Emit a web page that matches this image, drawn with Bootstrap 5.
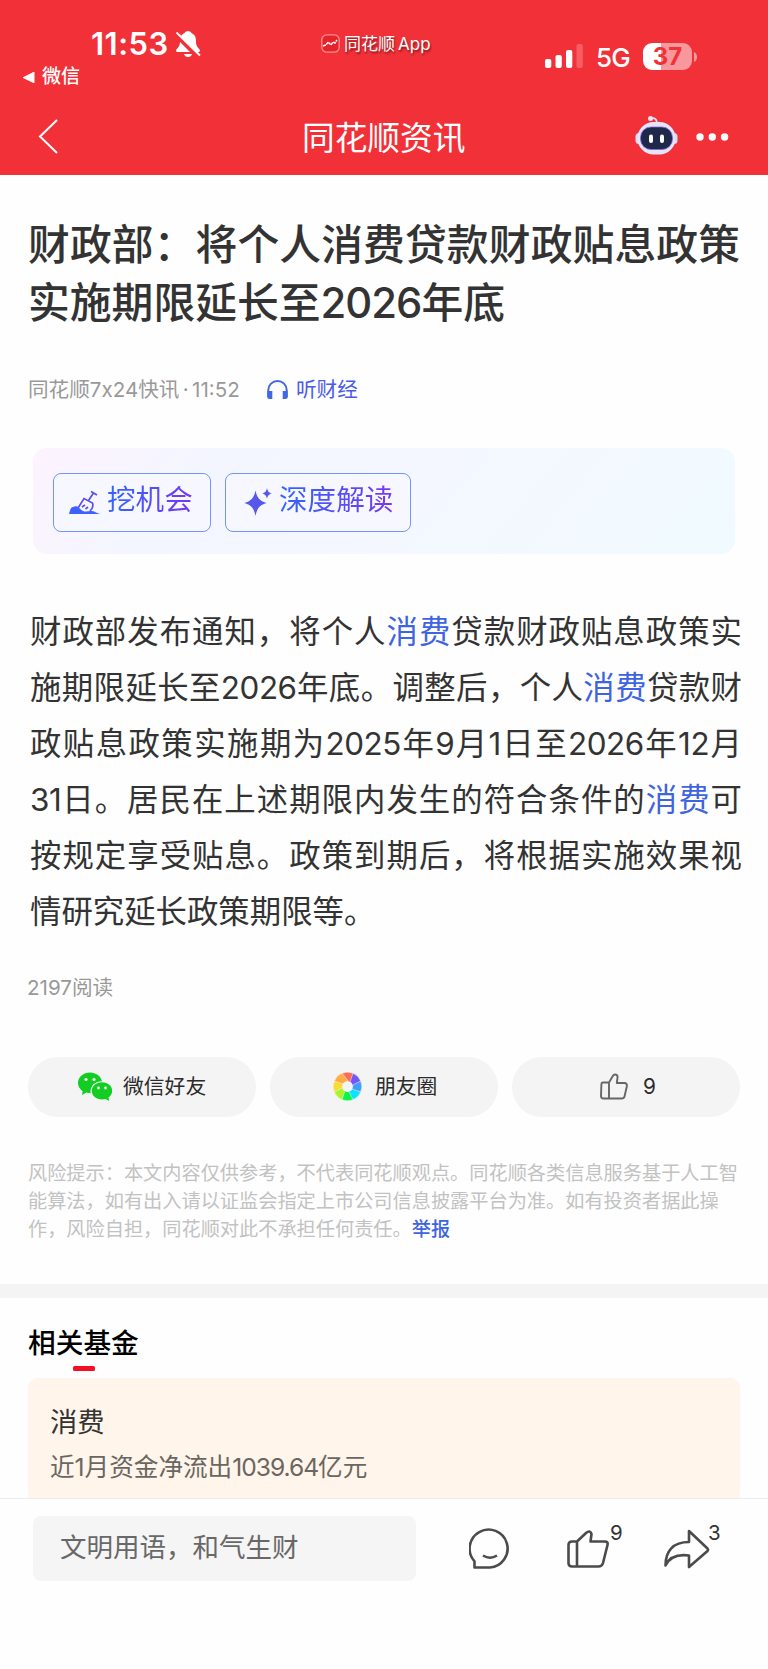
<!DOCTYPE html>
<html lang="zh-CN">
<head>
<meta charset="utf-8">
<meta name="viewport" content="width=device-width, initial-scale=1">
<title>同花顺资讯</title>
<link href="https://cdn.jsdelivr.net/npm/bootstrap@5.3.0/dist/css/bootstrap.min.css" rel="stylesheet">
<style>
body{font-family:Inter,"Noto Sans CJK SC",sans-serif;color:#333;background:#fefefe;width:768px;height:1669px;overflow:hidden}
svg{display:block;flex:none}
.app-head{background:#f23038;height:175px;color:#fff}
.status-row{height:100px}
.clock{font-size:31px;font-weight:600;line-height:36px;letter-spacing:.5px}
.back-app{font-size:19px;line-height:24px;font-weight:500}
.app-chip{font-size:17px;line-height:20px;text-shadow:1px 2px 2px rgba(0,0,0,.45)}
.net{font-size:26px;line-height:30px;font-weight:500;letter-spacing:-.9px}
.batt{width:49px;height:27px;border-radius:9px;background:linear-gradient(90deg,#fff 37%,#f9989c 37%);color:#f23038;font-size:24px;font-weight:700;line-height:27px}
.nav-row{height:75px}
.nav-title{font-size:32.7px;line-height:40px;width:164px;white-space:nowrap}
.headline{font-size:41.8px;line-height:57.6px;font-weight:500;padding:42px 28px 0;margin:0;color:#333}
.headline i,.story i,.fund-sub i{font-style:normal;letter-spacing:-1px}
.story i{letter-spacing:-.45px}
.fund-sub i{letter-spacing:-1px}
.fill-line{display:block;white-space:nowrap;text-align-last:justify}
.meta-row{font-size:20.6px;line-height:26px;color:#999;margin-top:45px;padding-left:28px}
.listen{color:#4a5bea}
.ai-box{margin:45px 33px 0;height:105.5px;border-radius:14px;padding:3px 0 0 20px;background:linear-gradient(130deg,#fdf3fe 0%,#f4f6ff 22%,#f4f8ff 65%,#f0fbff 100%)}
.ai-btn{height:59.5px;border:1.4px solid #7395fa;border-radius:8px;background:#f7f8ff;font-size:28.6px;line-height:40px}
.ai-btn span{background:linear-gradient(100deg,#2e68ff,#7a35f0);-webkit-background-clip:text;background-clip:text;color:transparent;position:relative;top:-2px}
.story{font-size:31.4px;line-height:56px;margin:50px 26px 0 30px}
.story a,.notice a{color:#3f64e0;text-decoration:none}
.reads{font-size:20.6px;line-height:26px;color:#999;margin:35px 0 0 27px}
.share-row{margin:56.5px 28px 0;gap:14px}
.pill-btn{width:228px;height:59.5px;border-radius:30px;background:#f4f4f4;color:#2b2b2b;font-size:20.8px}
.notice{font-size:19.2px;line-height:28px;color:#c2c2c2;margin:42px 28px 0}
.notice a{font-weight:500}
.band{height:13.5px;background:#f4f4f4;margin-top:41.5px}
.rel-title{font-size:27.7px;line-height:36px;font-weight:500;color:#000;margin:27px 0 0 28px}
.rel-mark{width:22px;height:5.5px;border-radius:1.5px;background:#f30f24;margin:5px 0 0 73px}
.fund{margin:6.5px 28px 0;height:120px;border-radius:9px 9px 0 0;background:#fff5eb;padding:27px 22px 0}
.fund-name{font-size:27.3px;line-height:36px}
.fund-sub{font-size:24.6px;line-height:32px;margin-top:10px;color:#6a6762}
.dock{height:171px;border-top:1px solid #ececee;background:#fefefe;padding:17px 0 0 33px}
.say{width:383px;height:65px;border-radius:8px;background:#f5f5f5;color:#686868;font-size:26.5px;padding-left:27px}
.dock-ico{position:relative;height:65px}
.dock-ico b{position:absolute;top:5px;font-size:20.5px;line-height:24px;font-weight:400}
</style>
</head>
<body>
<header class="app-head">
  <div class="status-row d-flex">
    <div style="width:321px">
      <div class="d-flex align-items-center" style="padding:26px 0 0 91px">
        <span class="clock">11:53</span>
        <svg style="margin-left:6px" width="26" height="28" viewBox="0 0 26 28"><path d="M13 1c-2 0-3 1-3.400 2C6 4.500 5 7.500 5 11c0 5-1.500 6-3.500 8.500-.8 1.200-.5 2.500 1 2.500h21c1.500 0 1.800-1.300 1-2.500C22.500 17 21 16 21 11c0-3.500-1-6.500-4.600-8C16 2 15 1 13 1zM9 24h8c-.5 1.800-2 3-4 3s-3.500-1.200-4-3z" fill="#fff"/><path d="M.5 4 24 27.500" stroke="#f23038" stroke-width="5"/><path d="M1.500 2.500 25 25.500" stroke="#fff" stroke-width="1.900"/></svg>
      </div>
      <div class="back-app d-flex align-items-center" style="padding:3px 0 0 22px">
        <svg width="13" height="13" viewBox="0 0 13 13"><path d="M1.500 6 11.500 1c.8-.3 1 0 1 .8v9.400c0 .8-.3 1-1 .7L1.500 7.200c-.8-.4-.8-.8 0-1.200z" fill="#fff"/></svg>
        <span style="margin-left:7px">微信</span>
      </div>
    </div>
    <div class="app-chip d-flex" style="padding-top:34px;width:224px">
      <svg width="19" height="19" viewBox="0 0 19 19"><rect x=".8" y=".8" width="17.400" height="17.400" rx="5" fill="#e5232b" stroke="#f98e90" stroke-width="1.300"/><path d="M2 12l3-1 2-3 3 3 2-3 2 1 2-3" fill="none" stroke="#fff" stroke-width="1.500" stroke-dasharray="3 .7"/></svg>
      <span style="margin-left:4px">同花顺<span style="margin-left:3px">App</span></span>
    </div>
    <div class="d-flex" style="padding-top:43px">
      <svg width="38" height="25" viewBox="0 0 38 25"><g fill="#fff"><rect x="0" y="16" width="6.300" height="9" rx="2"/><rect x="10.500" y="12" width="6.300" height="13" rx="2"/><rect x="21" y="7" width="6.300" height="18" rx="2"/><rect x="31.500" y="1" width="6.300" height="24" rx="2" opacity=".22"/></g></svg>
      <span class="net" style="margin-left:13px;width:47px">5G</span>
      <div class="batt text-center">37</div>
      <svg style="margin:9px 0 0 2px" width="3" height="10" viewBox="0 0 3 10"><path d="M0 0c4 1.500 4 8.500 0 10z" fill="#f9989c"/></svg>
    </div>
  </div>
  <div class="nav-row d-flex">
    <svg style="margin:18px 0 0 37px" width="22" height="37" viewBox="0 0 22 37"><path d="M20 2 3 18.500 20 35" fill="none" stroke="#fff" stroke-width="2"/></svg>
    <div class="nav-title" style="margin:17.500px 0 0 243px">同花顺资讯</div>
    <svg style="margin:15px 0 0 169px" width="43" height="40" viewBox="0 0 43 40"><path d="M16 3.500c3-1 6 0 6 5" fill="none" stroke="#e3e3f5" stroke-width="1.800"/><circle cx="15.500" cy="3.500" r="2.500" fill="#e3e3f5"/><rect x=".5" y="18" width="7" height="11" rx="3.500" fill="#d7dbf8"/><rect x="35.500" y="18" width="7" height="11" rx="3.500" fill="#d7dbf8"/><rect x="2.500" y="7" width="38" height="32.500" rx="16" fill="#e4e5f9"/><rect x="5.500" y="12" width="32" height="22.500" rx="10.500" fill="#1e2849" stroke="#8b66df" stroke-width=".8"/><rect x="14" y="19.500" width="4" height="8.500" rx="2" fill="#fff"/><rect x="25" y="19.500" width="4" height="8.500" rx="2" fill="#fff"/></svg>
    <svg style="margin:33px 0 0 18px" width="33" height="8" viewBox="0 0 33 8"><g fill="#fff"><circle cx="4" cy="4" r="3.700"/><circle cx="16.300" cy="4" r="3.700"/><circle cx="28.600" cy="4" r="3.700"/></g></svg>
  </div>
</header>

<main>
  <h1 class="headline"><span class="fill-line">财政部：将个人消费贷款财政贴息政策</span><span class="d-block">实施期限延长至<i>2026</i>年底</span></h1>
  <div class="meta-row d-flex align-items-center">
    <span style="width:239px;word-spacing:-2.4px">同花顺7x24快讯 · 11:52</span>
    <svg width="21" height="20" viewBox="0 0 21 20"><path d="M1.300 17v-7a9.200 9 0 0 1 18.400 0v7" fill="none" stroke="#4267df" stroke-width="2"/><path d="M.3 11h5v8H2.500C1 19 .3 18 .3 17zM20.700 11h-5v8h2.800c1.500 0 2.200-1 2.200-2z" fill="#4267df"/></svg>
    <span class="listen ms-2">听财经</span>
  </div>

  <div class="ai-box d-flex align-items-center">
    <div class="ai-btn d-flex align-items-center" style="width:157.500px;padding-left:15px">
      <svg width="31" height="25" viewBox="0 0 31 25"><path d="M0 24c1-4 2-7 4-7s3-1.500 5 0 3 3 5 4c3 1.500 6-.5 9 0 3 .7 5 2 8 3z" fill="#3f62ff"/><g fill="none" stroke="#5a50ee" stroke-width="1.700"><path d="M9 18 15 8.500l8.500 4.500c1.500 4-1.500 7-2.500 8M19.500 10.500 24.500 3M22 1.500l6 3.500M13 17l3-2M16.500 19l2.500-2"/></g></svg>
      <span style="margin-left:7px">挖机会</span>
    </div>
    <div class="ai-btn d-flex align-items-center" style="width:186px;margin-left:14.500px;padding-left:18px">
      <svg width="28" height="28" viewBox="0 0 28 28"><path d="M11.500 2.500c1.500 7 4 10.500 11.300 12.500-7.300 2-9.800 5.500-11.300 13C10 20.500 7.500 17 .2 15 7.500 13 10 9.500 11.500 2.500zM23 0c.7 3.300 1.700 4.600 5 5.500-3.300.9-4.300 2.200-5 5.500-.7-3.300-1.700-4.600-5-5.500 3.300-.9 4.300-2.200 5-5.500z" fill="#5558ea"/></svg>
      <span style="margin-left:7px">深度解读</span>
    </div>
  </div>

  <p class="story"><span class="fill-line">财政部发布通知，将个人<a href="#">消费</a>贷款财政贴息政策实</span><span class="fill-line">施期限延长至<i>2026</i>年底。调整后，个人<a href="#">消费</a>贷款财</span><span class="fill-line">政贴息政策实施期为<i>2025</i>年<i>9</i>月<i>1</i>日至<i>2026</i>年<i>12</i>月</span><span class="fill-line"><i>31</i>日。居民在上述期限内发生的符合条件的<a href="#">消费</a>可</span><span class="fill-line">按规定享受贴息。政策到期后，将根据实施效果视</span><span class="d-block">情研究延长政策期限等。</span></p>
  <div class="reads">2197阅读</div>

  <div class="share-row d-flex">
    <div class="pill-btn d-flex align-items-center" style="padding-left:50px">
      <svg width="34" height="29" viewBox="0 0 34 29"><path d="M12 .5C5.400.5 0 5 0 11c0 3.400 1.800 6.200 4.600 8.200L4 23l4.300-2.400c1.400.4 2.600.6 4.200.6C12 14 17 9 24 9.300 23 4.300 18 .5 12 .5z" fill="#12cd22"/><path d="M24 10.200c-5.800 0-10.200 3.800-10.200 8.600 0 4.900 4.400 8.600 10.200 8.600 1.300 0 2.500-.2 3.600-.5l3.700 2-.8-3.300c2.200-1.700 3.700-4 3.700-6.800 0-4.800-4.400-8.600-10.200-8.600z" fill="#12cd22"/><g fill="#fff"><circle cx="8" cy="7.500" r="1.600"/><circle cx="16" cy="7.500" r="1.600"/><circle cx="20.500" cy="16" r="1.400"/><circle cx="27.500" cy="16" r="1.400"/></g></svg>
      <span style="margin-left:11px">微信好友</span>
    </div>
    <div class="pill-btn d-flex align-items-center" style="padding-left:63px">
      <svg width="29" height="29" viewBox="-14.500 -14.500 29 29"><g stroke="#f4f4f4" stroke-width=".5">
        <path d="M-5.500-13.200A14.300 14.300 0 0 1 5.500-13.200L4.500-3.500-1.700-5.500z" fill="#ff6b50"/>
        <path transform="rotate(45)" d="M-5.500-13.200A14.300 14.300 0 0 1 5.500-13.200L4.500-3.500-1.700-5.500z" fill="#7456fb"/>
        <path transform="rotate(90)" d="M-5.500-13.200A14.300 14.300 0 0 1 5.500-13.200L4.500-3.500-1.700-5.500z" fill="#439dff"/>
        <path transform="rotate(135)" d="M-5.500-13.200A14.300 14.300 0 0 1 5.500-13.200L4.500-3.500-1.700-5.500z" fill="#0be3ff"/>
        <path transform="rotate(180)" d="M-5.500-13.200A14.300 14.300 0 0 1 5.500-13.200L4.500-3.500-1.700-5.500z" fill="#0df347"/>
        <path transform="rotate(225)" d="M-5.500-13.200A14.300 14.300 0 0 1 5.500-13.200L4.500-3.500-1.700-5.500z" fill="#a8f52c"/>
        <path transform="rotate(270)" d="M-5.500-13.200A14.300 14.300 0 0 1 5.500-13.200L4.500-3.500-1.700-5.500z" fill="#f8dc36"/>
        <path transform="rotate(315)" d="M-5.500-13.200A14.300 14.300 0 0 1 5.500-13.200L4.500-3.500-1.700-5.500z" fill="#ffac45"/></g><circle r="5.300" fill="#f4f4f4"/></svg>
      <span style="margin-left:13px">朋友圈</span>
    </div>
    <div class="pill-btn d-flex align-items-center" style="padding-left:88px">
      <svg width="28" height="27" viewBox="0 0 28 27"><path d="M9 9.500h-6Q1.500 9.500 1.400 11L1 23q0 2.500 2.500 2.500h18q2.500 0 3-2l2.300-10q.6-3.500-2.500-3.500h-7.500l.8-6q0-2.500-2.500-2.500-1.500 0-2.300 1.500zM9 9.500v16" fill="none" stroke="#666" stroke-width="1.900" stroke-linejoin="round"/></svg>
      <span style="margin-left:15px">9</span>
    </div>
  </div>

  <p class="notice"><span class="d-block text-nowrap">风险提示：本文内容仅供参考，不代表同花顺观点。同花顺各类信息服务基于人工智</span><span class="d-block">能算法，如有出入请以证监会指定上市公司信息披露平台为准。如有投资者据此操</span><span class="d-block">作，风险自担，同花顺对此不承担任何责任。<a href="#">举报</a></span></p>

  <div class="band"></div>
  <h2 class="rel-title">相关基金</h2>
  <div class="rel-mark"></div>
  <div class="fund">
    <div class="fund-name">消费</div>
    <div class="fund-sub">近1月资金净流出<i>1039.64</i>亿元</div>
  </div>
</main>

<footer class="dock d-flex">
  <div class="say d-flex align-items-center">文明用语，和气生财</div>
  <div class="dock-ico" style="margin-left:53px;width:98px;padding-top:12px"><svg width="42" height="42" viewBox="0 0 42 42"><path d="M5.500 39.500v-6.200A19 19 0 1 1 21 39.500zM14 27.500q7 4.500 14 0" fill="none" stroke="#4b4b4b" stroke-width="2.600" stroke-linejoin="round"/></svg></div>
  <div class="dock-ico" style="width:97px;padding-top:13px"><svg width="42" height="40" viewBox="0 0 42 40"><path d="M10 12.500h-5Q1.500 12.500 1.500 16v18Q1.500 37.500 5 37.500h26.500q3.500 0 4.500-3.500l4.500-18q.8-3.500-2.500-3.500H23.500l1-7.500q-1.500-4.500-5.500-1zM10 12.500v25" fill="none" stroke="#4b4b4b" stroke-width="2.600" stroke-linejoin="round"/></svg><b style="left:43px">9</b></div>
  <div class="dock-ico" style="padding-top:13px"><svg width="46" height="40" viewBox="0 0 46 40"><path d="M25 2 43.500 19.500q1 1.200 0 2.400L25 38V26.500C13 25 5 29 1.500 36.500 1.500 22 9 13 25 13z" fill="none" stroke="#4b4b4b" stroke-width="2.600" stroke-linejoin="round"/></svg><b style="left:44px">3</b></div>
</footer>
<script src="https://cdn.jsdelivr.net/npm/bootstrap@5.3.0/dist/js/bootstrap.bundle.min.js"></script>
</body>
</html>
